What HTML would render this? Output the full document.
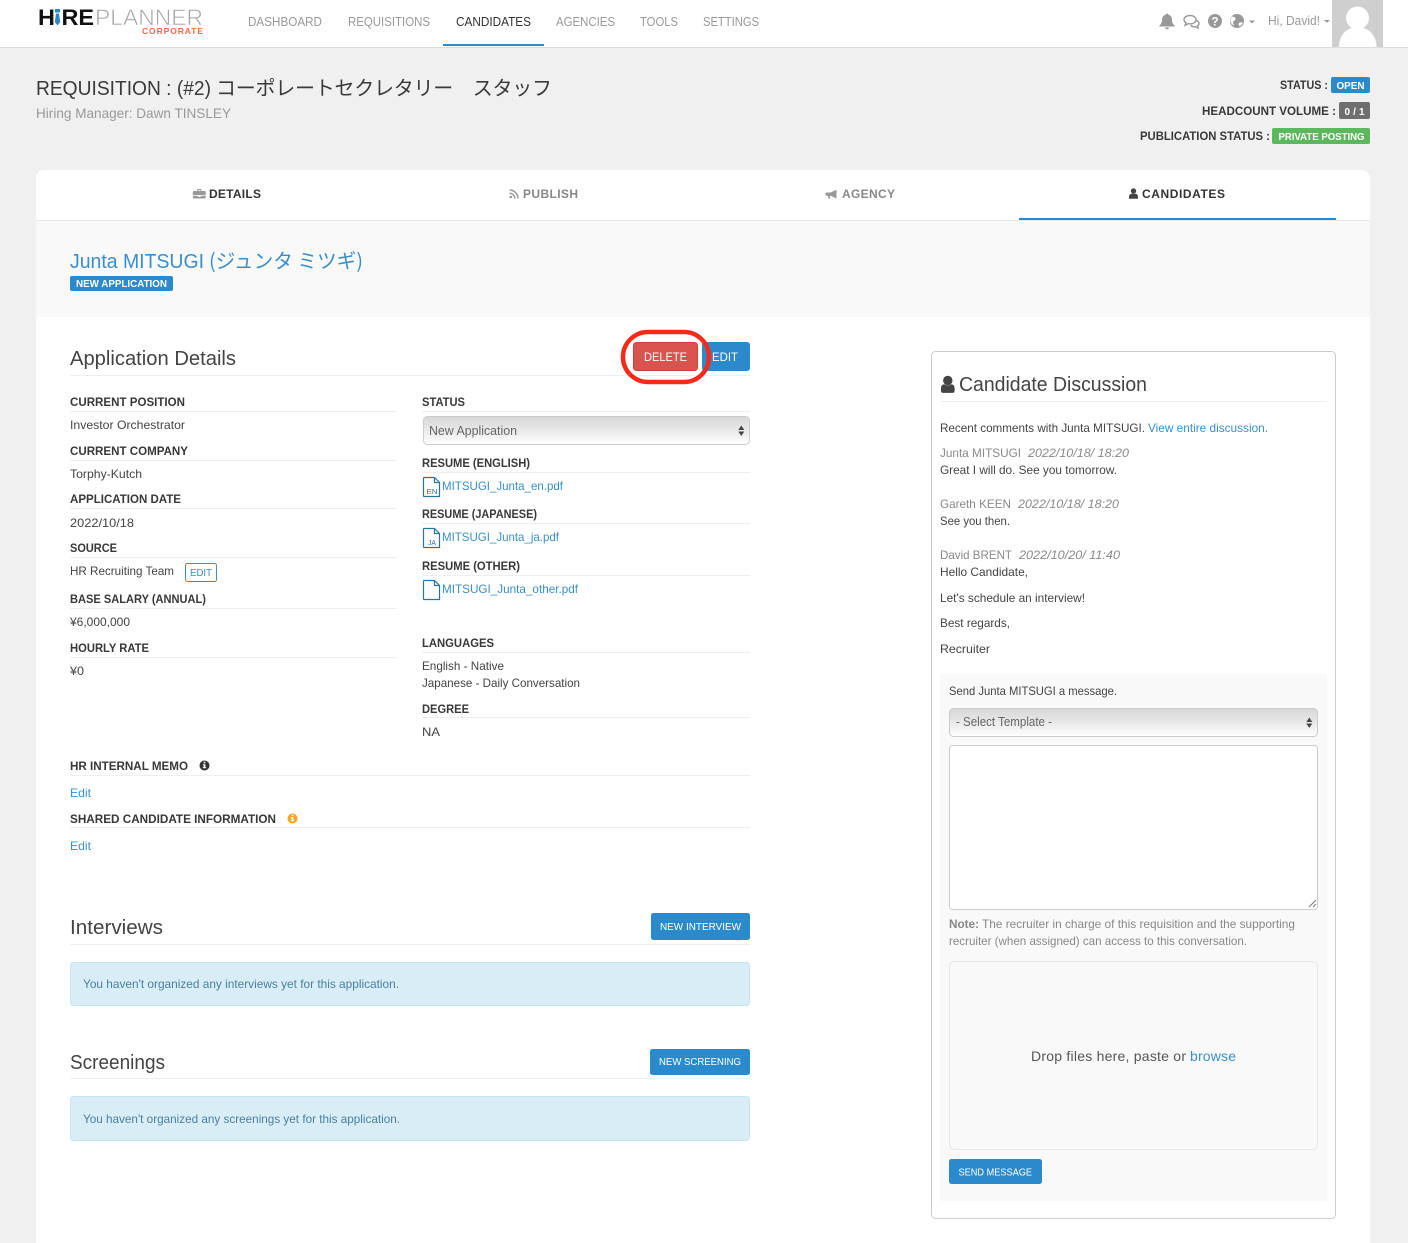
<!DOCTYPE html>
<html lang="en"><head><meta charset="utf-8"><title>Requisition - Candidates</title>
<style>
html,body{margin:0;padding:0;width:1408px;height:1243px;overflow:hidden;background:#f0f0f0}
svg{display:block}
text{font-family:"Liberation Sans","Noto Sans CJK JP",sans-serif;font-size:12.5px;fill:#444;white-space:pre}
.nav{font-size:12.5px;fill:#999}
.lb{font-size:12px;font-weight:700;fill:#383838}
.v{font-size:12px;fill:#444}
.a{font-size:12px;fill:#3a8fcb}
.g{font-size:12px;fill:#8a8a8a}
.i{font-size:12px;fill:#8a8a8a;font-style:italic}
.h{font-size:20px;fill:#444}
.tb{font-size:12px;font-weight:700;fill:#333}
.tg{font-size:12px;font-weight:700;fill:#888}
.w{font-size:10.5px;fill:#fff}
.wb{font-size:10px;font-weight:700;fill:#fff}
.n{font-size:12px;fill:#888}
.al{font-size:12px;fill:#4a7f9e}
.cj{font-family:"Noto Sans CJK JP","Liberation Sans",sans-serif}
</style></head><body>
<svg xmlns="http://www.w3.org/2000/svg" width="1408" height="1243" viewBox="0 0 1408 1243">
<defs>
<linearGradient id="sel" x1="0" y1="0" x2="0" y2="1"><stop offset="0" stop-color="#d6d6d6"/><stop offset=".55" stop-color="#ebebeb"/><stop offset="1" stop-color="#fff"/></linearGradient>
</defs>
<rect width="1408" height="1243" fill="#f0f0f0"/>

<!-- Header -->
<rect width="1408" height="47" fill="#fff"/>
<rect y="47" width="1408" height="1" fill="#ddd"/>
<text x="38" y="25" textLength="56" lengthAdjust="spacingAndGlyphs" style="font-size:22px;font-weight:700;fill:#111">H RE</text>
<path d="M55 9h5v3.500h-5zM56 13.500h3l1.200 8.500-2.700 3.500-2.700-3.500z" fill="#2b8acb"/>
<text x="95" y="25" textLength="108" lengthAdjust="spacingAndGlyphs" style="font-size:22px;fill:#a8a8a8;stroke:#fff;stroke-width:.6px">PLANNER</text>
<text x="142" y="34" textLength="61" lengthAdjust="spacing" style="font-size:8.500px;font-weight:700;fill:#f5694a">CORPORATE</text>
<text class="nav" x="248" y="26" textLength="74" lengthAdjust="spacingAndGlyphs">DASHBOARD</text>
<text class="nav" x="348" y="26" textLength="82" lengthAdjust="spacingAndGlyphs">REQUISITIONS</text>
<text class="nav" x="456" y="26" textLength="75" lengthAdjust="spacingAndGlyphs" style="fill:#333">CANDIDATES</text>
<text class="nav" x="556" y="26" textLength="59" lengthAdjust="spacingAndGlyphs">AGENCIES</text>
<text class="nav" x="640" y="26" textLength="38" lengthAdjust="spacingAndGlyphs">TOOLS</text>
<text class="nav" x="703" y="26" textLength="56" lengthAdjust="spacingAndGlyphs">SETTINGS</text>
<rect x="443" y="44" width="101" height="2" fill="#2b8acb"/>
<!-- header icons -->
<path d="M1167 13.500c.8 0 1.300.5 1.300 1.200 2.700.6 3.700 2.700 3.700 5.300 0 2.700.9 4.200 2.600 5.500v1h-15.200v-1c1.700-1.300 2.600-2.800 2.600-5.500 0-2.600 1-4.700 3.700-5.300 0-.7.500-1.200 1.300-1.200zM1164.800 27.500h4.400c-.2 1.100-1.100 1.800-2.200 1.800s-2-.7-2.200-1.800z" fill="#999"/>
<g fill="none" stroke="#999" stroke-width="1.400"><path d="M1190 15.500c3.500 0 6 1.900 6 4.200s-2.500 4.200-6 4.200c-.7 0-1.300-.1-1.900-.2l-3 1.600.8-2.700c-1.200-.8-1.900-1.800-1.900-2.900 0-2.300 2.500-4.200 6-4.200z" fill="#fff"/><path d="M1196.500 20.500c1.500.6 2.500 1.700 2.500 3 0 1-.6 1.900-1.500 2.500l.6 2-2.400-1.300c-1.800.3-3.700-.1-5-1.300"/></g>
<circle cx="1215" cy="21" r="7" fill="#999"/>
<text x="1211.500" y="25.500" textLength="7" lengthAdjust="spacingAndGlyphs" style="font-size:12px;font-weight:700;fill:#fff">?</text>
<circle cx="1237" cy="21" r="7" fill="#999"/>
<path d="M1232 16.500c2 .2 3.500 1 3.500 2.500s-2 1.500-2.500 3c-.3 1 .8 2 1.500 3.500-2-.5-3.800-2.200-4-4.500-.1-1.700.3-3.300 1.500-4.500zM1239 23c1.500-.8 3-1 3.700-.3-.5 1.500-1.700 2.800-3.200 3.500-.8-1-1.300-2.300-.5-3.200z" fill="#fff"/>
<path d="M1249 20.500h6l-3 3z" fill="#999"/>
<text x="1268" y="25" textLength="52" lengthAdjust="spacingAndGlyphs" style="font-size:12.500px;fill:#999">Hi, David!</text>
<path d="M1324 20h6l-3 2.800z" fill="#999"/>
<rect x="1332" width="51" height="47" fill="#cfcfcf"/>
<circle cx="1357.500" cy="18" r="11.500" fill="#fff"/>
<path d="M1339 47c0-12 8-20 18.500-20s19 8 19 20z" fill="#fff"/>

<!-- Title -->
<text x="36" y="95" textLength="175" lengthAdjust="spacingAndGlyphs" style="font-size:20.500px;fill:#3a3a3a">REQUISITION : (#2)</text>
<text class="cj" x="216" y="95" textLength="336" lengthAdjust="spacing" style="font-size:20px;fill:#3a3a3a">コーポレートセクレタリー　スタッフ</text>
<text x="36" y="118" textLength="195" lengthAdjust="spacingAndGlyphs" style="font-size:14px;fill:#999">Hiring Manager: Dawn TINSLEY</text>

<!-- Status -->
<text class="lb" x="1280" y="89" textLength="48" lengthAdjust="spacingAndGlyphs">STATUS :</text>
<rect x="1331" y="77" width="39" height="16" rx="2" fill="#2b8acb"/>
<text class="wb" x="1336.500" y="89" textLength="28" lengthAdjust="spacingAndGlyphs">OPEN</text>
<text class="lb" x="1202" y="115" textLength="134" lengthAdjust="spacingAndGlyphs">HEADCOUNT VOLUME :</text>
<rect x="1339" y="102" width="31" height="17" rx="2" fill="#6f6f6f"/>
<text class="wb" x="1344.500" y="115" textLength="20" lengthAdjust="spacing">0 / 1</text>
<text class="lb" x="1140" y="140" textLength="130" lengthAdjust="spacingAndGlyphs">PUBLICATION STATUS :</text>
<rect x="1272" y="128" width="98" height="16" rx="2" fill="#5cb85c"/>
<text class="wb" x="1278.500" y="140" textLength="86" lengthAdjust="spacingAndGlyphs">PRIVATE POSTING</text>

<!-- Panel -->
<path d="M36 1243V178a8 8 0 0 1 8-8H1362a8 8 0 0 1 8 8V1243z" fill="#fff"/>
<rect x="36" y="220" width="1334" height="1" fill="#e8e8e8"/>
<rect x="36" y="221" width="1334" height="96" fill="#f9f9f9"/>
<rect x="1019" y="218" width="317" height="2" fill="#2b8acb"/>

<!-- Tabs -->
<path d="M194 191h10.500a1.200 1.200 0 0 1 1.200 1.200v2.800h-12.900v-2.800a1.200 1.200 0 0 1 1.200-1.200zM197 191v-1a1 1 0 0 1 1-1h2.500a1 1 0 0 1 1 1v1h-1v-.9h-2.500v.9zM192.800 195.800h5v1h3v-1h4.900v1.500a1.200 1.200 0 0 1-1.200 1.200h-10.500a1.200 1.200 0 0 1-1.200-1.200z" fill="#999"/>
<text class="tb" x="209" y="198" textLength="52" lengthAdjust="spacing">DETAILS</text>
<circle cx="510.800" cy="197" r="1.300" fill="#999"/>
<path d="M509.500 193.200a5.300 5.300 0 0 1 5.300 5.300M509.500 190a8.500 8.500 0 0 1 8.500 8.500" fill="none" stroke="#999" stroke-width="1.500"/>
<text class="tg" x="523" y="198" textLength="55" lengthAdjust="spacing">PUBLISH</text>
<path d="M827 192.500h3.500l6-2.800v8.800l-6-2.800h-.8l.6 3h-1.800l-.6-3h-.9a1.500 1.500 0 0 1 0-3.200z" fill="#999"/>
<text class="tg" x="842" y="198" textLength="53" lengthAdjust="spacing">AGENCY</text>
<circle cx="1133.500" cy="191" r="2.700" fill="#444"/>
<path d="M1129 198.800v-2c0-1.700 1.200-3 2.600-3h3.800c1.400 0 2.600 1.300 2.600 3v2z" fill="#444"/>
<text class="tb" x="1142" y="198" textLength="83" lengthAdjust="spacing">CANDIDATES</text>

<!-- Candidate header -->
<text x="70" y="268" textLength="134" lengthAdjust="spacingAndGlyphs" style="font-size:20px;fill:#3a8fcb">Junta MITSUGI</text>
<text class="cj" x="209" y="268" textLength="154" lengthAdjust="spacingAndGlyphs" style="font-size:20px;fill:#3a8fcb">(ジュンタ ミツギ)</text>
<rect x="70" y="276" width="103" height="15" rx="2" fill="#2b8acb"/>
<text class="wb" x="76" y="287" textLength="91" lengthAdjust="spacingAndGlyphs">NEW APPLICATION</text>

<!-- Application details -->
<text class="h" x="70" y="365" textLength="166" lengthAdjust="spacingAndGlyphs">Application Details</text>
<rect x="70" y="375" width="680" height="1" fill="#eee"/>
<rect x="633.500" y="342.500" width="64" height="28" rx="3" fill="#d9534f" stroke="#c9413d" stroke-width="1"/>
<text x="644" y="361" textLength="43" lengthAdjust="spacingAndGlyphs" style="font-size:12px;fill:#fff">DELETE</text>
<rect x="702" y="342" width="48" height="29" rx="3" fill="#2b8acb"/>
<text x="712" y="361" textLength="26" lengthAdjust="spacingAndGlyphs" style="font-size:12px;fill:#fff">EDIT</text>
<rect x="623" y="332" width="86" height="50" rx="25" fill="none" stroke="#f52a18" stroke-width="4.500"/>

<!-- Left column -->
<text class="lb" x="70" y="406" textLength="115" lengthAdjust="spacingAndGlyphs">CURRENT POSITION</text>
<rect x="70" y="411" width="327" height="1" fill="#eee"/>
<text class="v" x="70" y="429" textLength="115" lengthAdjust="spacingAndGlyphs">Investor Orchestrator</text>
<text class="lb" x="70" y="455" textLength="118" lengthAdjust="spacingAndGlyphs">CURRENT COMPANY</text>
<rect x="70" y="460" width="327" height="1" fill="#eee"/>
<text class="v" x="70" y="478" textLength="72" lengthAdjust="spacingAndGlyphs">Torphy-Kutch</text>
<text class="lb" x="70" y="503" textLength="111" lengthAdjust="spacingAndGlyphs">APPLICATION DATE</text>
<rect x="70" y="508" width="327" height="1" fill="#eee"/>
<text class="v" x="70" y="527" textLength="64" lengthAdjust="spacingAndGlyphs">2022/10/18</text>
<text class="lb" x="70" y="552" textLength="47" lengthAdjust="spacingAndGlyphs">SOURCE</text>
<rect x="70" y="557" width="327" height="1" fill="#eee"/>
<text class="v" x="70" y="575" textLength="104" lengthAdjust="spacingAndGlyphs">HR Recruiting Team</text>
<rect x="185.500" y="563.500" width="31" height="18" rx="2" fill="#fff" stroke="#3a8fcb"/>
<text x="190" y="576" textLength="22" lengthAdjust="spacingAndGlyphs" style="font-size:10px;fill:#3a8fcb">EDIT</text>
<text class="lb" x="70" y="603" textLength="136" lengthAdjust="spacingAndGlyphs">BASE SALARY (ANNUAL)</text>
<rect x="70" y="608" width="327" height="1" fill="#eee"/>
<text class="v" x="70" y="626" textLength="60" lengthAdjust="spacingAndGlyphs">¥6,000,000</text>
<text class="lb" x="70" y="652" textLength="79" lengthAdjust="spacingAndGlyphs">HOURLY RATE</text>
<rect x="70" y="657" width="327" height="1" fill="#eee"/>
<text class="v" x="70" y="675" textLength="14" lengthAdjust="spacingAndGlyphs">¥0</text>

<!-- Right column -->
<text class="lb" x="422" y="406" textLength="43" lengthAdjust="spacingAndGlyphs">STATUS</text>
<rect x="422" y="411" width="328" height="1" fill="#eee"/>
<rect x="423.500" y="416.500" width="326" height="28" rx="4" fill="url(#sel)" stroke="#ccc"/>
<text x="429" y="435" textLength="88" lengthAdjust="spacingAndGlyphs" style="font-size:12.500px;fill:#666">New Application</text>
<path d="M741.300 425.500l3 4.500h-6zM741.300 436l3-4.500h-6z" fill="#444"/>
<text class="lb" x="422" y="467" textLength="108" lengthAdjust="spacingAndGlyphs">RESUME (ENGLISH)</text>
<rect x="422" y="472" width="328" height="1" fill="#eee"/>
<path d="M424 477.500h10.500l5 5v14h-15.500a.7.700 0 0 1-.5-.5v-18a.7.700 0 0 1 .5-.5zM434.500 477.500v5h5" fill="#fff" stroke="#2d739f" stroke-width="1.200"/>
<text x="426.500" y="494" textLength="11" lengthAdjust="spacingAndGlyphs" style="font-size:7.500px;fill:#2d739f">EN</text>
<text class="a" x="442" y="490" textLength="121" lengthAdjust="spacingAndGlyphs">MITSUGI_Junta_en.pdf</text>
<text class="lb" x="422" y="518" textLength="115" lengthAdjust="spacingAndGlyphs">RESUME (JAPANESE)</text>
<rect x="422" y="523" width="328" height="1" fill="#eee"/>
<path d="M424 528.500h10.500l5 5v14h-15.500a.7.700 0 0 1-.5-.5v-18a.7.700 0 0 1 .5-.5zM434.500 528.500v5h5" fill="#fff" stroke="#2d739f" stroke-width="1.200"/>
<text x="428" y="545" textLength="8" lengthAdjust="spacingAndGlyphs" style="font-size:7.500px;fill:#2d739f">JA</text>
<text class="a" x="442" y="541" textLength="117" lengthAdjust="spacingAndGlyphs">MITSUGI_Junta_ja.pdf</text>
<text class="lb" x="422" y="570" textLength="98" lengthAdjust="spacingAndGlyphs">RESUME (OTHER)</text>
<rect x="422" y="575" width="328" height="1" fill="#eee"/>
<path d="M424 580.500h10.500l5 5v14h-15.500a.7.700 0 0 1-.5-.5v-18a.7.700 0 0 1 .5-.5zM434.500 580.500v5h5" fill="#fff" stroke="#2d739f" stroke-width="1.200"/>
<text class="a" x="442" y="593" textLength="136" lengthAdjust="spacingAndGlyphs">MITSUGI_Junta_other.pdf</text>
<text class="lb" x="422" y="647" textLength="72" lengthAdjust="spacingAndGlyphs">LANGUAGES</text>
<rect x="422" y="652" width="328" height="1" fill="#eee"/>
<text class="v" x="422" y="670" textLength="82" lengthAdjust="spacingAndGlyphs">English - Native</text>
<text class="v" x="422" y="687" textLength="158" lengthAdjust="spacingAndGlyphs">Japanese - Daily Conversation</text>
<text class="lb" x="422" y="713" textLength="47" lengthAdjust="spacingAndGlyphs">DEGREE</text>
<rect x="422" y="717" width="328" height="1" fill="#eee"/>
<text class="v" x="422" y="736" textLength="18" lengthAdjust="spacingAndGlyphs">NA</text>

<!-- Memo -->
<text class="lb" x="70" y="770" textLength="118" lengthAdjust="spacingAndGlyphs">HR INTERNAL MEMO</text>
<circle cx="204.500" cy="765.500" r="5" fill="#333"/>
<path d="M203.700 761.800h1.700v1.500h-1.700zM203 764.300h2.400v3h.8v1h-3.400v-1h.8v-2h-.6z" fill="#fff"/>
<rect x="70" y="775" width="680" height="1" fill="#eee"/>
<text class="a" x="70" y="797" textLength="21" lengthAdjust="spacingAndGlyphs">Edit</text>
<text class="lb" x="70" y="823" textLength="206" lengthAdjust="spacingAndGlyphs">SHARED CANDIDATE INFORMATION</text>
<circle cx="292.500" cy="818.500" r="5" fill="#f5a623"/>
<path d="M291.700 814.800h1.700v1.500h-1.700zM291 817.300h2.400v3h.8v1h-3.400v-1h.8v-2h-.6z" fill="#fff"/>
<rect x="70" y="827" width="680" height="1" fill="#eee"/>
<text class="a" x="70" y="850" textLength="21" lengthAdjust="spacingAndGlyphs">Edit</text>

<!-- Interviews -->
<text class="h" x="70" y="934" textLength="93" lengthAdjust="spacingAndGlyphs">Interviews</text>
<rect x="651" y="913" width="99" height="27" rx="2.500" fill="#2b8acb"/>
<text class="w" x="660" y="930" textLength="81" lengthAdjust="spacingAndGlyphs">NEW INTERVIEW</text>
<rect x="70" y="944" width="680" height="1" fill="#eee"/>
<rect x="70.500" y="962.500" width="679" height="43" rx="3" fill="#d9edf7" stroke="#c5e6ef"/>
<text class="al" x="83" y="988" textLength="316" lengthAdjust="spacingAndGlyphs">You haven't organized any interviews yet for this application.</text>

<!-- Screenings -->
<text class="h" x="70" y="1069" textLength="95" lengthAdjust="spacingAndGlyphs">Screenings</text>
<rect x="650" y="1049" width="100" height="26" rx="2.500" fill="#2b8acb"/>
<text class="w" x="659" y="1065" textLength="82" lengthAdjust="spacingAndGlyphs">NEW SCREENING</text>
<rect x="70" y="1078" width="680" height="1" fill="#eee"/>
<rect x="70.500" y="1096.500" width="679" height="44" rx="3" fill="#d9edf7" stroke="#c5e6ef"/>
<text class="al" x="83" y="1123" textLength="317" lengthAdjust="spacingAndGlyphs">You haven't organized any screenings yet for this application.</text>

<!-- Discussion -->
<rect x="931.500" y="351.500" width="404" height="867" rx="4" fill="#fff" stroke="#ccc"/>
<circle cx="947.800" cy="380.500" r="4.700" fill="#444"/>
<path d="M941 391v-2.800c0-2.300 1.500-3.900 3.500-3.900 1 .8 2.100 1.200 3.300 1.200s2.300-.4 3.300-1.200c2 0 3.500 1.600 3.500 3.900v2.800c0 1.100-.9 1.900-2 1.900h-9.600c-1.100 0-2-.8-2-1.900z" fill="#444"/>
<text x="959" y="391" textLength="188" lengthAdjust="spacingAndGlyphs" style="font-size:20.500px;fill:#444">Candidate Discussion</text>
<rect x="940" y="401" width="387" height="1" fill="#eee"/>
<text class="v" x="940" y="432" textLength="205" lengthAdjust="spacingAndGlyphs">Recent comments with Junta MITSUGI.</text>
<text class="a" x="1148" y="432" textLength="120" lengthAdjust="spacingAndGlyphs">View entire discussion.</text>
<text class="g" x="940" y="457" textLength="81" lengthAdjust="spacingAndGlyphs">Junta MITSUGI</text>
<text class="i" x="1028" y="457" textLength="101" lengthAdjust="spacingAndGlyphs">2022/10/18/ 18:20</text>
<text class="v" x="940" y="474" textLength="177" lengthAdjust="spacingAndGlyphs">Great I will do. See you tomorrow.</text>
<text class="g" x="940" y="508" textLength="71" lengthAdjust="spacingAndGlyphs">Gareth KEEN</text>
<text class="i" x="1018" y="508" textLength="101" lengthAdjust="spacingAndGlyphs">2022/10/18/ 18:20</text>
<text class="v" x="940" y="525" textLength="70" lengthAdjust="spacingAndGlyphs">See you then.</text>
<text class="g" x="940" y="559" textLength="72" lengthAdjust="spacingAndGlyphs">David BRENT</text>
<text class="i" x="1019" y="559" textLength="101" lengthAdjust="spacingAndGlyphs">2022/10/20/ 11:40</text>
<text class="v" x="940" y="576" textLength="88" lengthAdjust="spacingAndGlyphs">Hello Candidate,</text>
<text class="v" x="940" y="602" textLength="145" lengthAdjust="spacingAndGlyphs">Let's schedule an interview!</text>
<text class="v" x="940" y="627" textLength="70" lengthAdjust="spacingAndGlyphs">Best regards,</text>
<text class="v" x="940" y="653" textLength="50" lengthAdjust="spacingAndGlyphs">Recruiter</text>

<!-- Message box -->
<rect x="940" y="674" width="387" height="527" rx="2" fill="#f9f9f9"/>
<text class="v" x="949" y="695" textLength="168" lengthAdjust="spacingAndGlyphs">Send Junta MITSUGI a message.</text>
<rect x="949.500" y="708.500" width="368" height="28" rx="4" fill="url(#sel)" stroke="#ccc"/>
<text x="956" y="726" textLength="96" lengthAdjust="spacingAndGlyphs" style="font-size:12.500px;fill:#666">- Select Template -</text>
<path d="M1309.300 717.500l3 4.500h-6zM1309.300 728l3-4.500h-6z" fill="#444"/>
<rect x="949.500" y="745.500" width="368" height="164" rx="3" fill="#fff" stroke="#ccc"/>
<path d="M1309 907l7-7M1313 907l3-3" stroke="#777" stroke-width="1" fill="none"/>
<text class="n" x="949" y="928" textLength="30" lengthAdjust="spacingAndGlyphs" style="font-weight:700">Note:</text>
<text class="n" x="982" y="928" textLength="313" lengthAdjust="spacingAndGlyphs">The recruiter in charge of this requisition and the supporting</text>
<text class="n" x="949" y="945" textLength="298" lengthAdjust="spacingAndGlyphs">recruiter (when assigned) can access to this conversation.</text>
<rect x="949.500" y="961.500" width="368" height="188" rx="5" fill="#f9f9f9" stroke="#e6e6e6"/>
<text x="1031" y="1061" textLength="155" lengthAdjust="spacing" style="font-size:14px;fill:#555">Drop files here, paste or</text>
<text x="1190" y="1061" textLength="46" lengthAdjust="spacing" style="font-size:14px;fill:#3a8fcb">browse</text>
<rect x="949" y="1159" width="93" height="25" rx="2.500" fill="#2b8acb"/>
<text class="w" x="958.500" y="1175.500" textLength="73.500" lengthAdjust="spacingAndGlyphs">SEND MESSAGE</text>
</svg>
</body></html>
